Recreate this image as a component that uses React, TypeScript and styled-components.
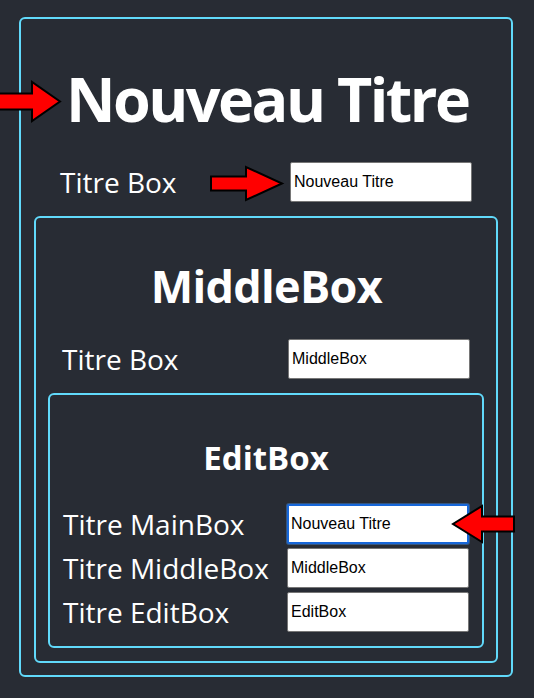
import React from "react";
import styled, { createGlobalStyle, css } from "styled-components";

const GlobalStyle = createGlobalStyle`
  html, body {
    margin: 0;
    padding: 0;
    background: #282c34;
  }
  body {
    font-family: "Open Sans", "Noto Sans", sans-serif;
    color: #ffffff;
  }
  *, *::before, *::after {
    box-sizing: border-box;
  }
`;

const Page = styled.main`
  position: relative;
  width: 534px;
  height: 698px;
  overflow: hidden;
  padding: 17px 0 0 19px;
`;

const Frame = styled.section<{ $pad: string; $width?: number; $mt?: number }>`
  display: flex;
  flex-direction: column;
  width: ${(p) => (p.$width ? `${p.$width}px` : "auto")};
  margin-top: ${(p) => p.$mt ?? 0}px;
  padding: ${(p) => p.$pad};
  border: 2px solid #61dafb;
  border-radius: 6px;
`;

const Heading = styled.h1<{ $size: number; $mt: number; $mb: number; $track: number }>`
  margin: ${(p) => p.$mt}px 0 ${(p) => p.$mb}px;
  font-family: "Open Sans", "Noto Sans", sans-serif;
  font-size: ${(p) => p.$size}px;
  letter-spacing: ${(p) => p.$track}px;
  text-indent: ${(p) => -p.$track}px;
  line-height: 1;
  font-weight: 700;
  text-align: center;
  color: #ffffff;
  white-space: nowrap;
`;

const Fields = styled.div`
  display: flex;
  flex-direction: column;
  gap: 4px;
`;

const Row = styled.label<{ $px: number }>`
  display: flex;
  align-items: center;
  justify-content: space-between;
  height: 40px;
  padding: 0 ${(p) => p.$px}px;
`;

const Label = styled.span`
  font-size: 28px;
  line-height: normal;
  color: #ffffff;
  white-space: nowrap;
`;

const Field = styled.input<{ $focused?: boolean }>`
  width: 182px;
  height: 40px;
  padding: 0 3px;
  font-family: "Liberation Sans", Arial, sans-serif;
  font-size: 16px;
  color: #000000;
  background: #ffffff;
  border: 1px solid #767676;
  border-radius: 2px;
  outline: none;
  ${(p) =>
    p.$focused &&
    css`
      border: 2px solid #1767d9;
      padding: 0 2px;
      box-shadow: 0 0 0 1px #34557f;
    `}
`;

const ArrowSvg = styled.svg<{ $left: number; $top: number; $flip?: boolean }>`
  position: absolute;
  left: ${(p) => p.$left}px;
  top: ${(p) => p.$top}px;
  overflow: visible;
  transform: ${(p) => (p.$flip ? "scaleX(-1)" : "none")};
  pointer-events: none;
`;

type ArrowProps = {
  left: number;
  top: number;
  shaft: number;
  thick: number;
  head: number;
  headH: number;
  flip?: boolean;
};

function Arrow({ left, top, shaft, thick, head, headH, flip }: ArrowProps) {
  const pad = 1;
  const w = shaft + head + pad * 2;
  const h = headH + pad * 2;
  const cy = pad + headH / 2;
  const x0 = pad;
  const x1 = pad + shaft;
  const x2 = pad + shaft + head;
  const pts = [
    [x0, cy - thick / 2],
    [x1, cy - thick / 2],
    [x1, pad],
    [x2, cy],
    [x1, pad + headH],
    [x1, cy + thick / 2],
    [x0, cy + thick / 2],
  ]
    .map(([x, y]) => `${x},${y}`)
    .join(" ");
  return (
    <ArrowSvg $left={left} $top={top} $flip={flip} width={w} height={h} viewBox={`0 0 ${w} ${h}`}>
      <polygon points={pts} fill="#ff0000" stroke="#000000" strokeWidth={2} strokeLinejoin="miter" />
    </ArrowSvg>
  );
}

export default function App() {
  return (
    <>
      <GlobalStyle />
      <Page>
        <Frame $pad="0 13px 12px" $width={494}>
          <Heading $size={61} $track={-2.5} $mt={49} $mb={33}>
            Nouveau Titre
          </Heading>
          <Row $px={26}>
            <Label>Titre Box</Label>
            <Field defaultValue="Nouveau Titre" />
          </Row>
          <Frame $pad="0 12px 13px" $mt={14}>
            <Heading $size={45} $track={-0.7} $mt={45} $mb={31}>
              MiddleBox
            </Heading>
            <Row $px={14}>
              <Label>Titre Box</Label>
              <Field defaultValue="MiddleBox" />
            </Row>
            <Frame $pad="0 0 14px" $mt={14}>
              <Heading $size={33} $track={0} $mt={46} $mb={30}>
                EditBox
              </Heading>
              <Fields>
                <Row $px={13}>
                  <Label>Titre MainBox</Label>
                  <Field defaultValue="Nouveau Titre" $focused />
                </Row>
                <Row $px={13}>
                  <Label>Titre MiddleBox</Label>
                  <Field defaultValue="MiddleBox" />
                </Row>
                <Row $px={13}>
                  <Label>Titre EditBox</Label>
                  <Field defaultValue="EditBox" />
                </Row>
              </Fields>
            </Frame>
          </Frame>
        </Frame>
        <Arrow left={-4} top={81} shaft={35} thick={16} head={28} headH={39} />
        <Arrow left={210} top={166} shaft={35} thick={14} head={36} headH={33} />
        <Arrow left={452} top={505} shaft={32} thick={15} head={29} headH={36} flip />
      </Page>
    </>
  );
}
